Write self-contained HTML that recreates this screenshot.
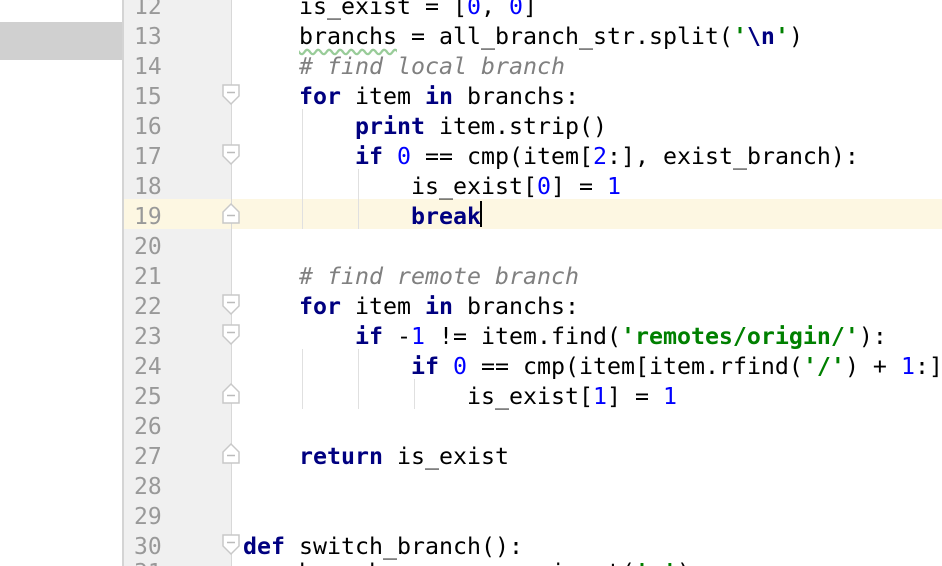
<!DOCTYPE html>
<html><head><style>
html,body{margin:0;width:942px;height:566px;overflow:hidden;}
body{background:#fff;position:relative;font-family:"DejaVu Sans Mono","Liberation Mono",monospace;}
.gut{position:absolute;left:122px;top:0;width:110px;height:566px;background:#f0f0f0;border-left:2px solid #d4d4d4;box-sizing:border-box;}
.fl{position:absolute;left:231px;top:0;width:1px;height:566px;background:#d8d8d8;}
.bar{position:absolute;left:0;top:22px;width:122px;height:38px;background:#d0d0d0;}
.hl{position:absolute;left:124px;top:199px;width:818px;height:30px;background:#fdf7e2;}
.n{position:absolute;left:134px;font-size:23px;color:#999;line-height:30px;height:30px;}
.c{position:absolute;left:243px;font-size:23.25px;line-height:30px;height:30px;white-space:pre;color:#000;}
.k{color:#000080;font-weight:bold}.d{color:#0000ff}.s{color:#008000;font-weight:bold}.m{color:#808080;font-style:italic}.e{color:#000080;font-weight:bold}
.w{text-decoration:underline wavy #9c9;text-underline-offset:4px}
.g{position:absolute;width:1px;background:#e0e0e0;}
.caret{position:absolute;left:480px;top:201px;width:2px;height:26px;background:#000;}
svg.f{position:absolute;left:221px;}
.t{position:absolute;left:0;top:3px;width:942px;height:566px;}
</style></head><body>
<div class="bar"></div>
<div class="gut"></div>
<div class="hl"></div>
<div class="fl"></div>
<div class="g" style="left:302px;top:109px;height:120px"></div>
<div class="g" style="left:358px;top:169px;height:60px"></div>
<div class="g" style="left:302px;top:349px;height:60px"></div>
<div class="g" style="left:358px;top:349px;height:60px"></div>
<div class="g" style="left:414px;top:379px;height:30px"></div>
<div class="t">
<div class="n" style="top:-11px">12</div><div class="c" style="top:-11px">    is_exist = [<span class="d">0</span>, <span class="d">0</span>]</div>
<div class="n" style="top:19px">13</div><div class="c" style="top:19px">    <span class="w">branchs</span> = all_branch_str.split(<span class="s">'<span class="e">\n</span>'</span>)</div>
<div class="n" style="top:49px">14</div><div class="c" style="top:49px">    <span class="m"># find local branch</span></div>
<div class="n" style="top:79px">15</div><div class="c" style="top:79px">    <span class="k">for</span> item <span class="k">in</span> branchs:</div>
<div class="n" style="top:109px">16</div><div class="c" style="top:109px">        <span class="k">print</span> item.strip()</div>
<div class="n" style="top:139px">17</div><div class="c" style="top:139px">        <span class="k">if</span> <span class="d">0</span> == cmp(item[<span class="d">2</span>:], exist_branch):</div>
<div class="n" style="top:169px">18</div><div class="c" style="top:169px">            is_exist[<span class="d">0</span>] = <span class="d">1</span></div>
<div class="n" style="top:199px">19</div><div class="c" style="top:199px">            <span class="k">break</span></div>
<div class="n" style="top:229px">20</div>
<div class="n" style="top:259px">21</div><div class="c" style="top:259px">    <span class="m"># find remote branch</span></div>
<div class="n" style="top:289px">22</div><div class="c" style="top:289px">    <span class="k">for</span> item <span class="k">in</span> branchs:</div>
<div class="n" style="top:319px">23</div><div class="c" style="top:319px">        <span class="k">if</span> -<span class="d">1</span> != item.find(<span class="s">'remotes/origin/'</span>):</div>
<div class="n" style="top:349px">24</div><div class="c" style="top:349px">            <span class="k">if</span> <span class="d">0</span> == cmp(item[item.rfind(<span class="s">'/'</span>) + <span class="d">1</span>:]</div>
<div class="n" style="top:379px">25</div><div class="c" style="top:379px">                is_exist[<span class="d">1</span>] = <span class="d">1</span></div>
<div class="n" style="top:409px">26</div>
<div class="n" style="top:439px">27</div><div class="c" style="top:439px">    <span class="k">return</span> is_exist</div>
<div class="n" style="top:469px">28</div>
<div class="n" style="top:499px">29</div>
<div class="n" style="top:529px">30</div><div class="c" style="top:529px"><span class="k">def</span> switch_branch():</div>
<div class="n" style="top:555px">31</div><div class="c" style="top:555px">    branch_name = raw_input(<span class="s">'a'</span>)</div>
</div>
<div class="caret"></div>

<svg class="f" style="top:83px" width="20" height="24"><path d="M2 2H18V13L10 21L2 13Z" fill="#fff" stroke="#c8c8c8" stroke-width="1.5"/><path d="M6 9.5H14" stroke="#bbb" stroke-width="1.5"/></svg>
<svg class="f" style="top:143px" width="20" height="24"><path d="M2 2H18V13L10 21L2 13Z" fill="#fff" stroke="#c8c8c8" stroke-width="1.5"/><path d="M6 9.5H14" stroke="#bbb" stroke-width="1.5"/></svg>
<svg class="f" style="top:201px" width="20" height="24"><path d="M2 22H18V11L10 3L2 11Z" fill="#fff" stroke="#c8c8c8" stroke-width="1.5"/><path d="M6 14.5H14" stroke="#bbb" stroke-width="1.5"/></svg>
<svg class="f" style="top:293px" width="20" height="24"><path d="M2 2H18V13L10 21L2 13Z" fill="#fff" stroke="#c8c8c8" stroke-width="1.5"/><path d="M6 9.5H14" stroke="#bbb" stroke-width="1.5"/></svg>
<svg class="f" style="top:323px" width="20" height="24"><path d="M2 2H18V13L10 21L2 13Z" fill="#fff" stroke="#c8c8c8" stroke-width="1.5"/><path d="M6 9.5H14" stroke="#bbb" stroke-width="1.5"/></svg>
<svg class="f" style="top:381px" width="20" height="24"><path d="M2 22H18V11L10 3L2 11Z" fill="#fff" stroke="#c8c8c8" stroke-width="1.5"/><path d="M6 14.5H14" stroke="#bbb" stroke-width="1.5"/></svg>
<svg class="f" style="top:441px" width="20" height="24"><path d="M2 22H18V11L10 3L2 11Z" fill="#fff" stroke="#c8c8c8" stroke-width="1.5"/><path d="M6 14.5H14" stroke="#bbb" stroke-width="1.5"/></svg>
<svg class="f" style="top:533px" width="20" height="24"><path d="M2 2H18V13L10 21L2 13Z" fill="#fff" stroke="#c8c8c8" stroke-width="1.5"/><path d="M6 9.5H14" stroke="#bbb" stroke-width="1.5"/></svg>
</body></html>
